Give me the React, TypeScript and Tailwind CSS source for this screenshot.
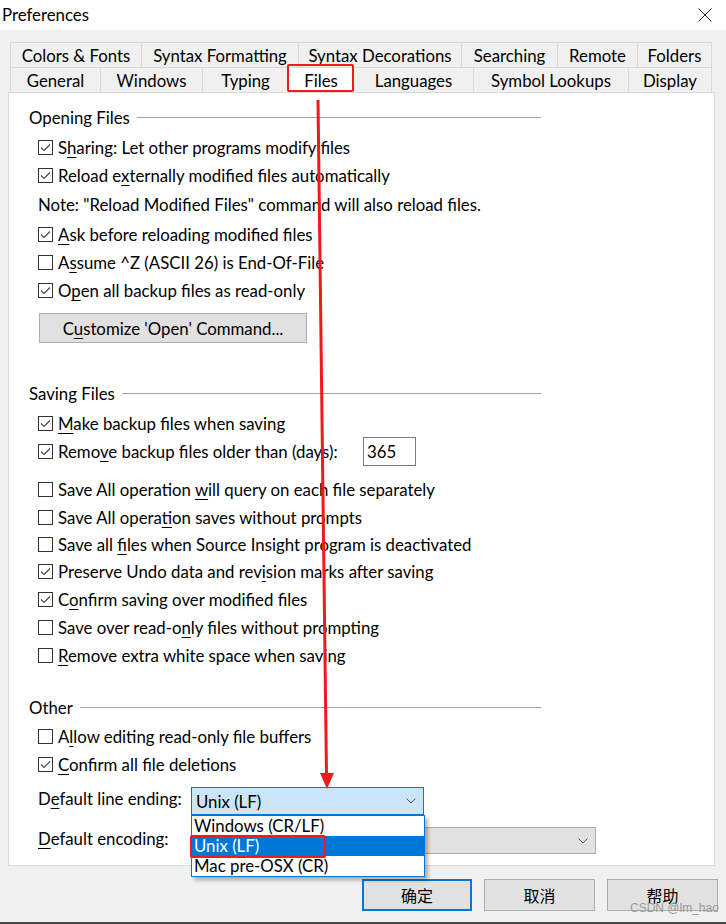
import React from "react";

type Tab = { label: string; w: string; active?: boolean };

const backRow: Tab[] = [
  { label: "Colors & Fonts", w: "w-[131px]" },
  { label: "Syntax Formatting", w: "w-[157px]" },
  { label: "Syntax Decorations", w: "w-[163px]" },
  { label: "Searching", w: "w-[96px]" },
  { label: "Remote", w: "w-[80px]" },
  { label: "Folders", w: "w-[75px]" },
];

const frontRow: Tab[] = [
  { label: "General", w: "w-[90px]" },
  { label: "Windows", w: "w-[102px]" },
  { label: "Typing", w: "w-[86px]" },
  { label: "Files", w: "w-[65px]", active: true },
  { label: "Languages", w: "w-[120px]" },
  { label: "Symbol Lookups", w: "w-[155px]" },
  { label: "Display", w: "w-[84px]" },
];

function TabRow({ tabs }: { tabs: Tab[] }) {
  return (
    <div className="flex h-[25px]">
      {tabs.map((t, i) => (
        <div
          key={t.label}
          className={`${t.w} h-full flex items-center justify-center pt-[2px] border-t border-l border-[#d9d9d9] ${
            i === tabs.length - 1 ? "border-r" : ""
          } ${t.active ? "bg-white" : ""}`}
        >
          {t.label}
        </div>
      ))}
    </div>
  );
}

function Group({ title, className = "" }: { title: string; className?: string }) {
  return (
    <div className={`h-[28px] w-[512px] flex items-center gap-[7px] ${className}`}>
      <span className="pt-[2px]">{title}</span>
      <div className="flex-1 h-px bg-[#a0a0a0]" />
    </div>
  );
}

function Box({ checked }: { checked: boolean }) {
  return (
    <svg width="15" height="15" viewBox="0 0 15 15" className="shrink-0">
      <rect x="0.5" y="0.5" width="14" height="14" fill="white" stroke="#333" />
      {checked && <path d="M3 7.5 L6 10.5 L12 4.5" fill="none" stroke="#444" strokeWidth="1.1" />}
    </svg>
  );
}

// label is split around the mnemonic letter
function Check({
  checked,
  pre,
  key_,
  post,
  className = "h-[28px]",
}: {
  checked: boolean;
  pre: string;
  key_: string;
  post: string;
  className?: string;
}) {
  return (
    <div className={`flex items-center gap-[5px] pl-[9px] ${className}`}>
      <Box checked={checked} />
      <span className="whitespace-pre pt-[2px]">
        {pre}
        <span className="underline underline-offset-[3px]">{key_}</span>
        {post}
      </span>
    </div>
  );
}

function Chevron() {
  return (
    <svg width="10" height="6" viewBox="0 0 10 6">
      <path d="M0.5 0.5 L5 5 L9.5 0.5" fill="none" stroke="#555" strokeWidth="1" />
    </svg>
  );
}

export default function App() {
  return (
    <div className="relative w-[726px] h-[924px] overflow-hidden bg-[#f0f0f0] text-[16.8px] leading-none text-black font-['Lato','Noto_Sans_CJK_SC',sans-serif]">
      {/* title bar */}
      <div className="h-[30px] bg-white flex items-center justify-between pl-[2px] pr-[14px]">
        <span>Preferences</span>
        <svg width="14" height="14" viewBox="0 0 14 14">
          <path d="M0.5 0.5 L13.5 13.5 M13.5 0.5 L0.5 13.5" stroke="#222" strokeWidth="1" />
        </svg>
      </div>

      {/* tabs */}
      <div className="pt-[12px] pl-[10px]">
        <TabRow tabs={backRow} />
        <TabRow tabs={frontRow} />
      </div>

      {/* page */}
      <div className="ml-[8px] w-[707px] bg-white border border-[#d9d9d9] pl-[20px] pb-[11px] flex flex-col">
        <Group title="Opening Files" className="mt-[10px]" />
        <Check checked pre="S" key_="h" post="aring: Let other programs modify files" className="mt-[2px] h-[28px]" />
        <Check checked pre="Reload e" key_="x" post="ternally modified files automatically" />
        <div className="mt-[2px] h-[28px] flex items-center pl-[9px] pt-[1px]">
          Note: "Reload Modified Files" command will also reload files.
        </div>
        <Check checked pre="" key_="A" post="sk before reloading modified files" className="mt-[2px] h-[27px]" />
        <Check checked={false} pre="A" key_="s" post="sume ^Z (ASCII 26) is End-Of-File" />
        <Check checked pre="O" key_="p" post="en all backup files as read-only" />
        <div className="mt-[9px] ml-[10px] w-[268px] h-[30px] bg-[#e1e1e1] border border-[#adadad] flex items-center justify-center pt-[2px]">
          <span>
            C<span className="underline underline-offset-[3px]">u</span>stomize 'Open' Command...
          </span>
        </div>

        <Group title="Saving Files" className="mt-[36px]" />
        <Check checked pre="" key_="M" post="ake backup files when saving" className="mt-[2px] h-[28px]" />
        <div className="h-[29px] flex items-center pl-[9px]">
          <div className="w-[325px] flex items-center gap-[5px]">
            <Box checked />
            <span className="whitespace-nowrap pt-[2px]">
              Remo<span className="underline underline-offset-[3px]">v</span>e backup files older than (days):
            </span>
          </div>
          <div className="w-[53px] h-[29px] border border-[#7a7a7a] bg-white flex items-center pl-[3px] pt-[2px]">365</div>
        </div>
        <Check checked={false} pre="Save All operation " key_="w" post="ill query on each file separately" className="mt-[10px] h-[27px]" />
        <Check checked={false} pre="Save All opera" key_="t" post="ion saves without prompts" />
        <Check checked={false} pre="Save all " key_="f" post="iles when Source Insight program is deactivated" className="h-[27px]" />
        <Check checked pre="Preserve Undo data and rev" key_="i" post="sion marks after saving" className="h-[27px]" />
        <Check checked pre="C" key_="o" post="nfirm saving over modified files" />
        <Check checked={false} pre="Save over read-o" key_="n" post="ly files without prompting" />
        <Check checked={false} pre="" key_="R" post="emove extra white space when saving" />

        <Group title="Other" className="mt-[24px]" />
        <Check checked={false} pre="A" key_="l" post="low editing read-only file buffers" className="mt-[2px] h-[27px]" />
        <Check checked pre="" key_="C" post="onfirm all file deletions" />
        <div className="mt-[9px] h-[28px] flex items-center pl-[9px]">
          <span className="w-[153px] pb-[4px]">
            D<span className="underline underline-offset-[3px]">e</span>fault line ending:
          </span>
          <div className="w-[233px] h-[28px] bg-[#cce4f7] border border-[#0078d7] flex items-center justify-between pl-[4px] pr-[7px]">
            <span className="pt-[2px]">Unix (LF)</span>
            <Chevron />
          </div>
        </div>
        <div className="mt-[12px] h-[27px] flex items-center pl-[9px]">
          <span className="w-[153px] pb-[2px]">
            <span className="underline underline-offset-[3px]">D</span>efault encoding:
          </span>
          <div className="w-[405px] h-[27px] bg-[#e1e1e1] border border-[#adadad] flex items-center justify-end pr-[7px]">
            <Chevron />
          </div>
        </div>
      </div>

      {/* dialog buttons */}
      <div className="mt-[13px] ml-[362px] flex gap-[12px] text-[16px] font-['Noto_Sans_CJK_SC',sans-serif]">
        <div className="w-[110px] h-[32px] bg-[#e1e1e1] border-2 border-[#0078d7] flex items-center justify-center">确定</div>
        <div className="w-[111px] h-[32px] bg-[#e1e1e1] border border-[#adadad] flex items-center justify-center">取消</div>
        <div className="w-[111px] h-[32px] bg-[#e1e1e1] border border-[#adadad] flex items-center justify-center">帮助</div>
      </div>
      <div className="mt-[11px] h-[2px] bg-[#4a4a4a]" />

      {/* open combo list */}
      <div className="absolute left-[191px] top-[815px] w-[234px] bg-white border border-[#0078d7] shadow-[3px_3px_4px_rgba(0,0,0,0.3)]">
        <div className="h-[20px] flex items-center pl-[2px] pt-[1px]">Windows (CR/LF)</div>
        <div className="h-[20px] flex items-center pl-[2px] pt-[1px] bg-[#0078d7] text-white">Unix (LF)</div>
        <div className="h-[20px] flex items-center pl-[2px] pt-[1px]">Mac pre-OSX (CR)</div>
      </div>

      {/* annotations */}
      <div className="absolute left-[287px] top-[64px] w-[67px] h-[28px] border-2 border-[#f2191c] rounded-[2px]" />
      <div className="absolute left-[190px] top-[835px] w-[136px] h-[23px] border-2 border-[#f2191c] rounded-[2px]" />
      <svg className="absolute left-0 top-0 pointer-events-none" width="726" height="924">
        <line x1="318" y1="100" x2="326.5" y2="776" stroke="#f2191c" strokeWidth="3" />
        <polygon points="320,773 334,773 327,789" fill="#f2191c" />
      </svg>

      <div className="absolute left-[630px] top-[902px] text-[12px] leading-none text-[#9a9a9a] font-['Liberation_Sans',sans-serif]">
        CSDN @lm_hao
      </div>
    </div>
  );
}
